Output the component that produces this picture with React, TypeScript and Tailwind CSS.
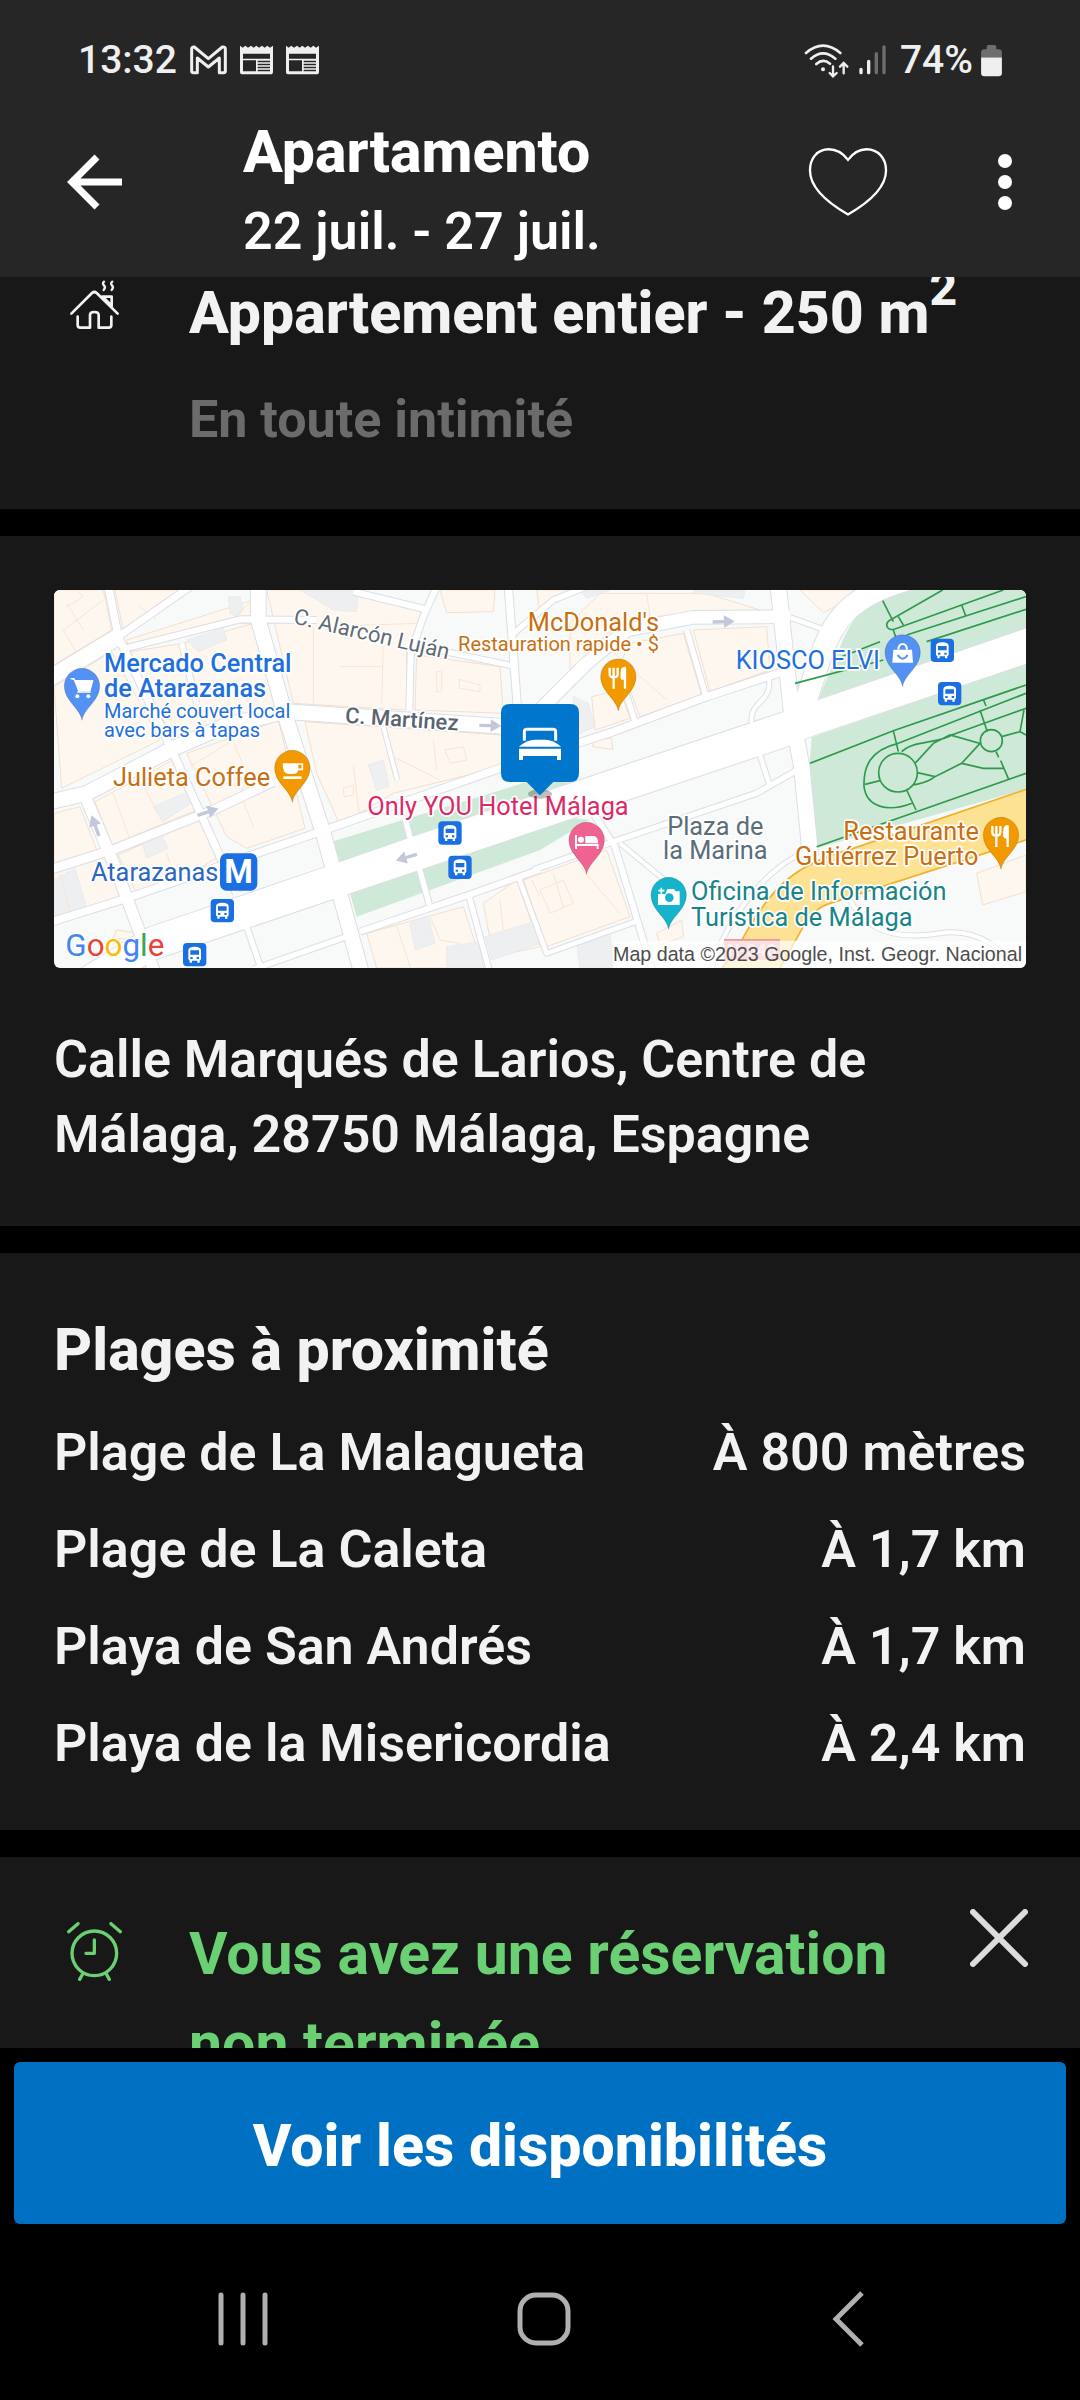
import type { ReactNode } from "react";

const beaches = [
  { name: "Plage de La Malagueta", distance: "À 800 mètres" },
  { name: "Plage de La Caleta", distance: "À 1,7 km" },
  { name: "Playa de San Andrés", distance: "À 1,7 km" },
  { name: "Playa de la Misericordia", distance: "À 2,4 km" },
];

const blocks = [
  "M42 30H190L215 150L42 255Z",
  "M225 30H420L250 150Z",
  "M260 180L640 60L650 100L600 115L265 200Z",
  "M270 215L430 190L640 130L715 375L560 420L400 480L290 260Z",
  "M42 320L215 215L360 480L65 625Z",
  "M680 30H945L1150 95L1100 210V390L760 370Z",
  "M1200 30H1365L1360 95L1220 98Z",
  "M1130 225L1380 260L1390 400L1125 390Z",
  "M795 425L1385 465V560L1060 640L900 735L830 580Z",
  "M440 520L610 460L715 420L795 745L620 805L560 770Z",
  "M165 665L400 540L470 690L215 795Z",
  "M42 700L120 680L170 810L42 850Z",
  "M235 825L490 710L545 825L470 870L290 940Z",
  "M42 880L200 830L240 955L42 1020Z",
  "M980 1060L1270 980L1330 1164H1010Z",
  "M1330 970L1430 900L1500 1100L1360 1130Z",
  "M1450 900L1700 810L1770 1010L1520 1100Z",
  "M230 1050L300 1060L310 1080L220 1075Z",
  "M1490 30H1600L1500 100Z",
  "M1590 130L1680 40H2000L2160 90L2150 105L1860 108L1700 160L1590 300Z",
  "M1960 150L2180 140L2190 270L2010 335Z",
  "M1770 190L1930 160L1985 345L1800 410L1740 250Z",
  "M1655 350L1740 330L1770 415L1665 450Z",
  "M1660 475H1715L1718 508L1658 500Z",
  "M2280 30H2480L2350 98Z",
  "M2810 880L2958 825V935L2828 975Z",
  "M1850 1060L1925 1020L1930 1070L1860 1095Z",
];

const greyBlocks = [
  "M440 180L550 143L560 180L475 215Z",
  "M565 50L600 50L610 90L590 110L570 100Z",
  "M340 680L460 628L470 660L368 725Z",
  "M780 30H955L950 95L880 90Z",
  "M305 785L365 765L385 805L320 835Z",
  "M42 900L105 865L140 985L42 1015Z",
  "M985 555L1030 540L1048 620L1010 630Z",
  "M1110 1030L1165 1008L1185 1090L1125 1110Z",
  "M1335 1070L1480 1025L1500 1090L1355 1140Z",
  "M1220 1100L1320 1085L1330 1164H1220Z",
  "M1600 350L1645 370L1665 440L1600 470Z",
  "M1610 1090L1710 1060L1720 1164H1620Z",
  "M1620 30H1710L1640 55Z",
  "M1960 30H2115L2110 55L1965 40Z",
];

const roofLines =
  "M80 70L130 150M190 60L70 150L110 220M300 80L350 120M110 30L130 50L80 80M640 60L560 130L700 130M820 140V370M900 260H1030M1000 150L1030 190L1025 370M830 140L1140 130M1190 275H1205V335H1190ZM1258 298L1320 315V335L1258 325ZM450 560L580 480L610 560M640 740L600 640L620 600M1060 530L1200 600M1180 480L1190 570M300 600L350 690M220 640L270 780M940 560L960 720M910 625L940 615V645L912 650ZM1215 510L1270 500L1280 540L1230 550ZM380 820L390 850M60 880L90 1000M1070 1040L1110 1160M1170 1010L1200 1080L1260 1090M1880 360L1700 200M1820 40L1830 110M1540 880L1570 980M1500 930L1570 900L1600 970L1530 1000ZM1620 860L1740 1000M1475 900L1500 950M1380 960L1390 1050";

const roads: [string, number][] = [
  ["M205 20L235 170L400 520L590 940", 22],
  ["M20 300L235 170", 48],
  ["M235 170L450 20", 20],
  ["M255 205L600 118L830 120", 18],
  ["M20 668L140 640L400 505L560 435L740 395L1400 440", 44],
  ["M140 660L225 860L300 1060L345 1180", 34],
  ["M20 872L230 805L520 690L700 605", 26],
  ["M20 1030L260 955L840 755L1380 565L1720 455L2000 350L2220 278", 22],
  ["M425 190L470 370", 16],
  ["M940 35L1165 90", 18],
  ["M1190 20L1150 110L1112 220L1108 390", 18],
  ["M1170 205L1420 258", 16],
  ["M1405 20L1432 380", 22],
  ["M1415 165L1540 60L1640 20", 16],
  ["M1500 390L1640 250L1760 150L1960 112L2250 110", 38],
  ["M655 20L655 120L740 420L850 760L965 1180", 44],
  ["M2215 20L2255 400L2285 560L2312 830", 46],
  ["M2600 0C2420 50 2380 130 2345 220L2285 400", 64],
  ["M2250 112L2360 152", 14],
  ["M1940 150L1998 350", 16],
  ["M1745 300L1785 425", 16],
  ["M2185 285C2205 370 2125 360 2135 430", 12],
  ["M2160 525L2190 620", 14],
  ["M1480 870L1720 785L2150 640L2275 568", 16],
  ["M1660 700L1725 800L1840 1180", 18],
  ["M1740 790L1910 930", 12],
  ["M2010 1180C2060 1000 2200 850 2290 820", 12],
  ["M2430 960C2480 1060 2580 1080 2700 1060S2900 1120 2940 1180", 12],
  ["M960 1055L1300 940L1500 868", 18],
  ["M1285 940L1350 1180", 16],
  ["M1138 865L1168 975", 16],
  ["M1095 715L1112 780", 16],
  ["M620 1040L668 1180", 16],
  ["M640 1168L925 1068", 16],
  ["M1030 440L1072 600", 12],
  ["M1435 890L1520 1120L1800 1020", 14],
];

const parkPaths =
  "M2528 62L2560 125M2708 30L2555 118C2530 130 2540 155 2565 147L2890 30M2575 110L2590 135M2765 75L2778 110M2560 150L2600 270M2600 165L2958 50M2660 185L2958 88M2265 310L2530 240M2380 240L2520 185M2310 550L2560 452L2958 315M2560 452L2575 515M2575 490L2958 340M2585 515C2620 480 2700 490 2735 465L2958 385M2830 358L2838 378M2820 390L2842 455M2625 550L2680 490L2730 465L2820 490L2765 550L2685 590L2632 578M2765 550L2830 565L2890 565M2685 590C2660 610 2640 610 2620 615M2885 470L2940 455L2958 465M2952 390L2940 455M2868 515L2876 532M2882 542L2906 598M2575 490C2490 510 2470 560 2472 620C2480 680 2540 700 2620 668M2475 613L2520 602M2600 630L2628 690M2330 800L2958 580";

const busStops = [
  [1195, 724],
  [1225, 827],
  [512, 957],
  [429, 1089],
  [2672, 176],
  [2694, 306],
];

const Pin = ({ x, y, fill, children }: { x: number; y: number; fill: string; children: ReactNode }) => (
  <g transform={`translate(${x} ${y})`}>
    <path
      d="M0 103C-5 66-53 46-53 0A53 53 0 1 1 53 0C53 46 5 66 0 103Z"
      fill={fill}
      stroke="#000"
      strokeOpacity="0.15"
      strokeWidth="3"
    />
    {children}
  </g>
);

const Fork = () => (
  <g fill="none" stroke="#fff" strokeWidth="7">
    <path d="M-26-27V-8Q-26 2-14 2T-2-8V-27M-14-27V36" />
    <path d="M12-24Q8-8 12 6H20V36M20 6V-26Q12-28 10-10V6" fill="#fff" />
  </g>
);

const Bus = ({ x, y }: { x: number; y: number }) => (
  <g transform={`translate(${x} ${y})`}>
    <rect width="70" height="70" rx="12" fill="#1a6fe3" />
    <path
      fill="#fff"
      fillRule="evenodd"
      d="M16 22Q16 11 35 11T54 22V49L50 53V59H43V53H27V59H20V53L16 49ZM22 22V35H48V22ZM22 42V48H29V42ZM41 42V48H48V42Z"
    />
  </g>
);

const Arrow = ({ x, y, angle }: { x: number; y: number; angle: number }) => (
  <path
    transform={`translate(${x} ${y}) rotate(${angle})`}
    d="M-32-5H2V-19L34 0L2 19V5H-32Z"
    fill="#c3c7da"
  />
);

const MapView = () => (
  <svg
    viewBox="42 30 2916 1134"
    role="img"
    aria-label="Plan du quartier"
    className="block h-auto w-full rounded-md font-[Roboto,sans-serif]"
  >
    <path d="M42 30H2958V1164H42Z" fill="#f8faf9" />
    <g fill="#fef7ef" stroke="#f3dfcd" strokeWidth="3">
      {blocks.map((d) => (
        <path key={d} d={d} />
      ))}
    </g>
    <g fill="#eeeff0" stroke="#e6e7ea" strokeWidth="2">
      {greyBlocks.map((d) => (
        <path key={d} d={d} />
      ))}
    </g>
    <path d={roofLines} fill="none" stroke="#f7e5d6" strokeWidth="3" />
    <g fill="#cfe9d8">
      <path d="M875 785L1480 600L1620 610L1400 690L900 845Z" />
      <path d="M930 940L1600 715L1650 720L1500 810L950 1010Z" />
      <path d="M2560 30H2958V145L2335 358L2400 200Q2450 70 2560 30Z" />
      <path d="M2265 312L2300 302L2290 380L2270 380Z" />
      <path d="M2315 472L2958 250V628L2330 805L2308 560Z" />
    </g>
    <g fill="none" strokeLinejoin="round">
      {roads.map(([d, w]) => (
        <path key={d} d={d} stroke="#dcdee5" strokeWidth={w + 6} />
      ))}
      <path
        d="M100 1180L320 1045L855 862L1105 775L1615 602L2220 400L2335 360L2980 138V244L2310 470L2240 500L1500 748L930 940L620 1045L340 1140L280 1180Z"
        stroke="#dcdee5"
        strokeWidth="6"
      />
      {roads.map(([d, w]) => (
        <path key={d} d={d} stroke="#fff" strokeWidth={w} />
      ))}
    </g>
    <path
      d="M100 1180L320 1045L855 862L1105 775L1615 602L2220 400L2335 360L2980 138V244L2310 470L2240 500L1500 748L930 940L620 1045L340 1140L280 1180Z"
      fill="#fff"
    />
    <path
      d="M2970 624L2440 805Q2310 840 2240 900T2100 1090L2035 1180H2210L2290 1040Q2320 985 2370 970L2970 776Z"
      fill="#fde293"
      stroke="#f0b12f"
      strokeWidth="5"
    />
    <g fill="none" stroke="#2f9a4c" strokeWidth="5">
      <path d={parkPaths} />
      <circle cx="2574" cy="578" r="58" />
      <circle cx="2854" cy="482" r="33" />
    </g>

    <Arrow x={1350} y={437} angle={2} />
    <Arrow x={503} y={696} angle={-18} />
    <Arrow x={166} y={738} angle={-110} />
    <Arrow x={1100} y={832} angle={164} />
    <Arrow x={2050} y={125} angle={-2} />

    {busStops.map(([x, y]) => (
      <Bus key={`${x}-${y}`} x={x} y={y} />
    ))}

    <rect x="2052" y="1077" width="168" height="62" fill="#e99a9c" />
    <text x="2136" y="1128" textAnchor="middle" fontSize="52" fontWeight="700" fill="#f6d4d5">
      N-340
    </text>

    <g fontSize="76" stroke="#fff" strokeWidth="10" strokeLinejoin="round" paintOrder="stroke">
      <text transform="translate(758 130) rotate(13)" fontSize="66" fill="#5f6b76">
        C. Alarcón Luján
      </text>
      <text transform="translate(914 428) rotate(4)" fontSize="66" fontWeight="500" fill="#5a636e">
        C. Martínez
      </text>
      <g fill="#1f6fde">
        <text x="192" y="275" fontWeight="500">
          Mercado Central
        </text>
        <text x="192" y="350" fontWeight="500">
          de Atarazanas
        </text>
        <text x="192" y="413" fontSize="60">
          Marché couvert local
        </text>
        <text x="192" y="472" fontSize="60">
          avec bars à tapas
        </text>
        <text x="2520" y="268" textAnchor="end">
          KIOSCO ELVI
        </text>
      </g>
      <text x="153" y="902" fill="#2b66c4">
        Atarazanas
      </text>
      <g fill="#c96f10">
        <text x="219" y="617">
          Julieta Coffee
        </text>
        <text x="1857" y="152" textAnchor="end">
          McDonald's
        </text>
        <text x="1857" y="214" fontSize="60" textAnchor="end">
          Restauration rapide • $
        </text>
        <text x="2817" y="780" textAnchor="end">
          Restaurante
        </text>
        <text x="2815" y="855" textAnchor="end">
          Gutiérrez Puerto
        </text>
      </g>
      <text x="982" y="704" fill="#dc2a68">
        Only YOU Hotel Málaga
      </text>
      <g fill="#5b6d79" textAnchor="middle">
        <text x="2026" y="764">
          Plaza de
        </text>
        <text x="2026" y="838">
          la Marina
        </text>
      </g>
      <g fill="#168489">
        <text x="1953" y="960">
          Oficina de Información
        </text>
        <text x="1953" y="1037">
          Turística de Málaga
        </text>
      </g>
    </g>

    <Pin x={126} y={318} fill="#5491f5">
      <path d="M-34-22H-24L-10 14H24L32-16H-20" fill="#fff" stroke="#fff" strokeWidth="4" />
      <path d="M-14 18H26" stroke="#fff" strokeWidth="5" />
      <circle cx="-14" cy="31" r="6" fill="#fff" />
      <circle cx="19" cy="31" r="6" fill="#fff" />
    </Pin>
    <Pin x={757} y={564} fill="#f29900">
      <path d="M-29-14H18V2Q18 18 2 18H-12Q-29 18-29-14Z" fill="#fff" />
      <path d="M16-12H30V4H16" fill="none" stroke="#fff" strokeWidth="5" />
      <path d="M-27 29H28" stroke="#fff" strokeWidth="8" />
    </Pin>
    <Pin x={1735} y={290} fill="#f29900">
      <Fork />
    </Pin>
    <Pin x={2588} y={217} fill="#5491f5">
      <path d="M-28-8H28L31 31H-31Z" fill="#fff" />
      <path d="M-13-8Q-12-25 0-25T13-8" fill="none" stroke="#fff" strokeWidth="6" />
      <path d="M-15 8Q0 30 15 8" fill="none" stroke="#5491f5" strokeWidth="6" />
    </Pin>
    <Pin x={1640} y={780} fill="#f06292">
      <path d="M-32-15V27M-32 15H33V27" fill="none" stroke="#fff" strokeWidth="6" />
      <circle cx="-17" cy="-1" r="9" fill="#fff" />
      <path d="M-4-12H22Q34-10 34 8V10H-4Z" fill="#fff" />
    </Pin>
    <Pin x={1886} y={945} fill="#16b3cd">
      <path d="M-32-3H-10L-4-18H16L20-11H33V30H-32Z" fill="#fff" />
      <circle cx="2" cy="8" r="13" fill="#16b3cd" />
      <path d="M-22-22V-4M-31-13H-13" stroke="#fff" strokeWidth="5" />
    </Pin>
    <Pin x={2883} y={765} fill="#f29900">
      <Fork />
    </Pin>

    <rect x="540" y="820" width="112" height="112" rx="20" fill="#1a6fe3" />
    <text x="596" y="910" textAnchor="middle" fontSize="98" fontWeight="700" fill="#fff">
      M
    </text>

    <ellipse cx="1500" cy="642" rx="36" ry="14" fill="#000" fillOpacity="0.25" />
    <path
      d="M1409 372H1591Q1617 372 1617 398V580Q1617 606 1591 606H1540L1500 646L1460 606H1409Q1383 606 1383 580V398Q1383 372 1409 372Z"
      fill="#0077cc"
    />
    <path
      d="M1453 482V456Q1453 448 1461 448H1539Q1547 448 1547 456V482"
      fill="none"
      stroke="#fff"
      strokeWidth="9"
    />
    <path d="M1437 500Q1460 479 1485 479H1515Q1540 479 1563 500Z" fill="#fff" />
    <path d="M1437 506H1563V540H1551V528H1449V540H1437Z" fill="#fff" />

    <path d="M1718 1082H2958V1164H1718Z" fill="#fff" fillOpacity="0.7" />
    <text
      x="2946"
      y="1144"
      textAnchor="end"
      fontSize="59"
      fill="#4d4d4d"
      className="font-['Liberation_Sans',sans-serif]"
    >
      Map data ©2023 Google, Inst. Geogr. Nacional
    </text>
    <text x="76" y="1127" fontSize="94" stroke="#fff" strokeWidth="8" paintOrder="stroke">
      <tspan fill="#4285f4">G</tspan>
      <tspan fill="#ea4335">o</tspan>
      <tspan fill="#fbbc04">o</tspan>
      <tspan fill="#4285f4">g</tspan>
      <tspan fill="#34a853">l</tspan>
      <tspan fill="#ea4335">e</tspan>
    </text>
  </svg>
);

const NewsIcon = () => (
  <svg viewBox="0 0 99 90" className="h-[30px] w-[33px]">
    <path
      fill="#efefef"
      fillRule="evenodd"
      d="M0 2L8 8L16 2L24 8L33 2L41 8L49 2L57 8L66 2L74 8L82 2L90 8L99 2V80Q99 88 91 88H8Q0 88 0 80ZM9 26V41H90V26ZM9 46V79H48V46ZM53 47V52H90V47ZM53 56V61H90V56ZM53 65V70H90V65ZM53 74V79H90V74Z"
    />
  </svg>
);

const StatusBar = () => (
  <div className="flex h-[46px] items-center justify-between px-[78px] text-[39px] leading-[46px] font-medium text-[#efefef]">
    <div className="flex items-center gap-[13px]">
      <span>13:32</span>
      <svg viewBox="33 30 111 90" className="h-[30px] w-[37px]">
        <path
          d="M38 108V42Q38 35 46 36L88 71L130 36Q139 35 139 42V108Q139 113 134 113H121V69L88 96L55 69V113H43Q38 113 38 108Z"
          fill="none"
          stroke="#efefef"
          strokeWidth="9"
          strokeLinejoin="round"
        />
      </svg>
      <NewsIcon />
      <NewsIcon />
    </div>
    <div className="flex items-center gap-2">
      <svg viewBox="48 20 138 105" className="h-[35px] w-[46px]">
        <g fill="none" stroke="#efefef" strokeWidth="8" strokeLinecap="round">
          <path d="M54 50Q105 6 157 50M69 67Q105 35 142 67M85 83Q105 65 126 82" />
          <path d="M135 90V119M125 110L135 120L146 110M167 111V81M156 91L167 80L178 91" strokeWidth="7" />
        </g>
        <circle cx="105" cy="99" r="6" fill="#efefef" />
      </svg>
      <svg viewBox="207 26 90 96" className="h-8 w-[30px]">
        <g strokeWidth="10" strokeLinecap="round" stroke="#efefef">
          <path d="M216 102V112M239 78V112" />
          <path d="M262 55V112M285 35V112" stroke="#6e6e6e" />
        </g>
      </svg>
      <span className="ml-1">74%</span>
      <svg viewBox="573 22 63 100" className="h-[33px] w-[21px]">
        <path d="M590 38V30Q590 25 595 25H614Q619 25 619 30V38H626Q636 38 636 48V64H573V48Q573 38 583 38Z" fill="#6e6e6e" />
        <path d="M573 63H636V110Q636 120 626 120H583Q573 120 573 110Z" fill="#efefef" />
      </svg>
    </div>
  </div>
);

const Header = () => (
  <header className="shrink-0 bg-[#262626] pt-[37px]">
    <StatusBar />
    <div className="flex items-start pt-[34px] pr-[67px] pl-[66px] text-white">
      <button aria-label="Retour" className="flex h-[130px] items-center">
        <svg viewBox="0 0 56 56" className="size-14" fill="none" stroke="#fff" strokeWidth="7">
          <path d="M56 28H6M31 3L6 28L31 53" />
        </svg>
      </button>
      <div className="ml-[121px] grow">
        <h1 className="text-[59px] leading-[70px] font-extrabold">Apartamento</h1>
        <p className="text-[52px] leading-[90px] font-semibold">22 juil. - 27 juil.</p>
      </div>
      <button aria-label="Ajouter aux favoris" className="flex h-[130px] items-center">
        <svg viewBox="55 338 242 210" className="h-[70px] w-20">
          <path
            d="M176 376C160 355 142 344 118 344C82 344 61 372 61 408C61 460 110 503 176 541C242 503 291 460 291 408C291 372 268 344 232 344C210 344 192 355 176 376Z"
            fill="none"
            stroke="#fff"
            strokeWidth="7"
          />
        </svg>
      </button>
      <button aria-label="Plus d'options" className="ml-[109px] flex h-[130px] items-center">
        <svg viewBox="0 0 14 56" className="h-14 w-4" fill="#fff">
          <circle cx="7" cy="7" r="7" />
          <circle cx="7" cy="28" r="7" />
          <circle cx="7" cy="49" r="7" />
        </svg>
      </button>
    </div>
  </header>
);

const Footer = () => (
  <footer className="shrink-0 bg-black pt-3.5">
    <div className="px-3.5">
      <button className="w-full rounded-md bg-[#0071c2] pt-12 pb-[42px] text-[59px] leading-[72px] font-extrabold text-white">
        Voir les disponibilités
      </button>
    </div>
    <nav className="grid grid-cols-3 pt-[67px] pr-[85px] pb-[53px] pl-[93px]">
      <button aria-label="Applications récentes" className="flex justify-center">
        <svg viewBox="0 0 56 56" className="size-14" stroke="#b0b0b0" strokeWidth="5" strokeLinecap="round">
          <path d="M6 4V52M28 4V52M50 4V52" />
        </svg>
      </button>
      <button aria-label="Accueil" className="flex justify-center">
        <svg viewBox="0 0 56 56" className="size-14" fill="none" stroke="#b0b0b0" strokeWidth="5">
          <rect x="4" y="4" width="48" height="48" rx="16" />
        </svg>
      </button>
      <button aria-label="Précédent" className="flex justify-center">
        <svg viewBox="0 0 56 56" className="size-14" fill="none" stroke="#b0b0b0" strokeWidth="5">
          <path d="M45 2L19 28L45 54" />
        </svg>
      </button>
    </nav>
  </footer>
);

const App = () => {
  return (
    <div className="flex h-screen flex-col bg-black font-[Roboto,sans-serif] text-[#f2f2f2]">
      <Header />
      <main className="flex min-h-0 grow flex-col gap-[27px] overflow-hidden">
        <section className="flex shrink-0 gap-[67px] bg-[#181818] px-[66px] pb-[51px]">
          <svg viewBox="48 24 168 168" className="size-14 shrink-0">
            <g fill="none" stroke="#f2f2f2" strokeWidth="8" strokeLinecap="round" strokeLinejoin="round">
              <path d="M64 134L126 72Q133 66 140 72L203 134M157 83H185V113M161 86L183 108" />
              <path d="M83 143V168Q83 176 91 176H120V138Q120 129 133 129T146 138V176H176Q184 176 184 168V143" />
              <path d="M162 38Q156 43 162 49T161 63M187 38Q180 43 186 49T185 63" strokeWidth="7" />
            </g>
          </svg>
          <div>
            <h2 className="text-[59px] leading-[72px] font-extrabold">
              Appartement entier - 250 m<sup className="-top-7 text-[48px]">2</sup>
            </h2>
            <p className="mt-[33px] text-[52px] leading-[76px] font-bold text-[#6b6b6b]">En toute intimité</p>
          </div>
        </section>

        <section className="shrink-0 bg-[#181818] p-[54px]">
          <MapView />
          <p className="mt-[54px] text-[52px] leading-[75px] font-semibold">
            Calle Marqués de Larios, Centre de Málaga, 28750 Málaga, Espagne
          </p>
        </section>

        <section className="shrink-0 bg-[#181818] px-[54px] pt-[54px] pb-[27px]">
          <h2 className="text-[59px] leading-[86px] font-extrabold">Plages à proximité</h2>
          <table className="mt-[22px] w-full text-[52px] leading-[75px] font-semibold">
            <tbody>
              {beaches.map((beach) => (
                <tr key={beach.name}>
                  <td className="p-0 pb-[22px]">{beach.name}</td>
                  <td className="p-0 pb-[22px] text-right">{beach.distance}</td>
                </tr>
              ))}
            </tbody>
          </table>
        </section>

        <section className="flex shrink-0 items-start bg-[#181818] pt-[52px] pr-[52px] pb-[54px] pl-[66px]">
          <svg viewBox="48 66 168 180" className="mt-[13px] h-[60px] w-14 shrink-0">
            <g fill="none" stroke="#6bd074" strokeWidth="10" strokeLinecap="round" strokeLinejoin="round">
              <circle cx="133" cy="160" r="67" />
              <path d="M133 120V160H108M56 95L84 71M183 71L211 95M98 222L89 238M169 222L178 238" />
            </g>
          </svg>
          <p className="ml-[67px] grow text-[59px] leading-[90px] font-bold text-[#6bd074]">
            Vous avez une réservation non terminée
          </p>
          <button aria-label="Fermer" className="shrink-0">
            <svg viewBox="0 0 58 58" className="size-[58px]" stroke="#dcdcdc" strokeWidth="6" strokeLinecap="round">
              <path d="M3 3L55 55M55 3L3 55" />
            </svg>
          </button>
        </section>
      </main>
      <Footer />
    </div>
  );
};

export default App;
